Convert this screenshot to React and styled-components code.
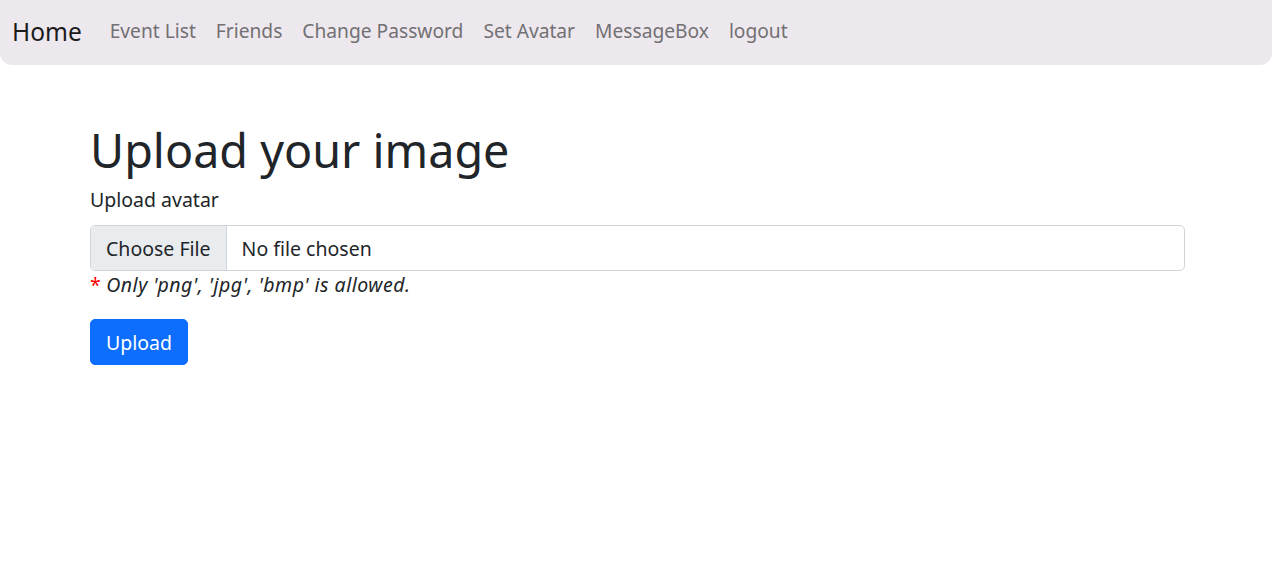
import React from "react";
import styled, { createGlobalStyle } from "styled-components";

const Global = createGlobalStyle`
  html, body { margin: 0; padding: 0; background: #fff; }
  body { font-family: "Noto Sans", "Open Sans", sans-serif; color: #212529; }
`;

const Navbar = styled.nav`
  display: flex;
  align-items: center;
  height: 65px;
  padding: 0 12px 4px;
  background: #ede8ee;
  border-radius: 0 0 12px 12px;
  box-sizing: border-box;
`;

const Brand = styled.a`
  font-size: 24.5px;
  color: #1b1b1b;
  text-decoration: none;
  margin-right: 18px;
  padding-top: 1px;
`;

const NavList = styled.div`
  display: flex;
`;

const NavLink = styled.a`
  font-size: 19.2px;
  color: #727073;
  text-decoration: none;
  padding: 0 10px;
`;

const Main = styled.main`
  padding: 57px 0 0 90px;
  width: 1095px;
`;

const Title = styled.h1`
  margin: 0 0 8px;
  font-size: 46.7px;
  font-weight: 400;
  line-height: 1.2;
`;

const Label = styled.label`
  display: block;
  font-size: 19.5px;
  margin-bottom: 12px;
`;

const FileBox = styled.div`
  display: flex;
  align-items: stretch;
  height: 46px;
  border: 1px solid #ced4da;
  border-radius: 5px;
  box-sizing: border-box;
  overflow: hidden;
  font-size: 19.5px;
`;

const FileButton = styled.span`
  display: flex;
  align-items: center;
  padding: 0 15px;
  background: #e9ecef;
  border-right: 1px solid #ced4da;
`;

const FileName = styled.span`
  display: flex;
  align-items: center;
  padding: 0 15px;
`;

const Hint = styled.p`
  margin: 0;
  font-size: 19.5px;
  font-style: italic;
  letter-spacing: 0.5px;
`;

const Star = styled.span`
  color: #ff0000;
  font-style: normal;
  margin-right: 5px;
`;

const Button = styled.button`
  margin-top: 21px;
  height: 46px;
  padding: 0 15px;
  font-family: inherit;
  font-size: 19.5px;
  color: #fff;
  background: #0d6efd;
  border: 1px solid #0d6efd;
  border-radius: 5px;
`;

export default function App() {
  const links = ["Event List", "Friends", "Change Password", "Set Avatar", "MessageBox", "logout"];
  return (
    <>
      <Global />
      <Navbar>
        <Brand href="#">Home</Brand>
        <NavList>
          {links.map((l) => (
            <NavLink key={l} href="#">{l}</NavLink>
          ))}
        </NavList>
      </Navbar>
      <Main>
        <Title>Upload your image</Title>
        <Label>Upload avatar</Label>
        <FileBox>
          <FileButton>Choose File</FileButton>
          <FileName>No file chosen</FileName>
        </FileBox>
        <Hint><Star>*</Star>Only 'png', 'jpg', 'bmp' is allowed.</Hint>
        <Button>Upload</Button>
      </Main>
    </>
  );
}
